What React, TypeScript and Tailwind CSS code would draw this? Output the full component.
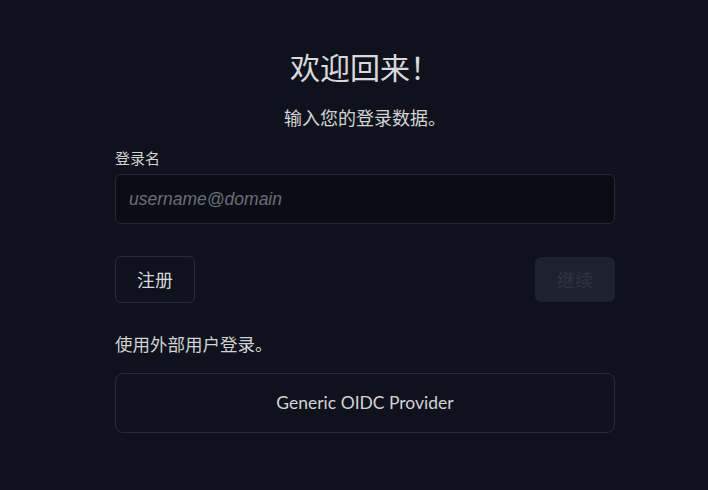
import React, {useState} from "react";

const cjk = {fontFamily: '"Noto Sans CJK SC", "Liberation Sans", sans-serif'}

export default function App() {

    const [login, setLogin] = useState('')

    return (
        <div className="min-h-screen w-full bg-[#0f121c] text-[#d6d7da] pl-[22px]" style={cjk}>
            <div className="w-[500px] mx-auto pt-[48px] flex flex-col">
                <h1 className="text-center text-[30px] leading-[36px] font-normal text-[#d9d9dc]">欢迎回来！</h1>
                <p className="mt-[21px] text-center text-[18px] leading-[24px] text-[#d2d3d6]">输入您的登录数据。</p>

                <label htmlFor="login" className="mt-[19px] text-[15px] leading-[20px] text-[#d2d3d6]">登录名</label>
                <input
                    id="login"
                    value={login}
                    onChange={e => setLogin(e.target.value)}
                    placeholder="username@domain"
                    className="mt-[6px] h-[50px] w-full rounded-md border border-[#262a35] bg-[#0a0d16] px-[13px] text-[17.5px] italic text-[#d2d3d6] placeholder:text-[#6a6d74] outline-none"
                    style={{fontFamily: '"Liberation Sans", Arial, sans-serif'}}
                />

                <div className="mt-[32px] flex items-center justify-between">
                    <button className="h-[47px] w-[80px] rounded-md border border-[#262a35] text-[18px] text-[#d6d7da]">注册</button>
                    <button disabled className="h-[45px] w-[80px] rounded-md bg-[#1e222d] text-[18px] text-[#30343f]">继续</button>
                </div>

                <p className="mt-[29px] text-[17.5px] leading-[24px] text-[#d2d3d6]">使用外部用户登录。</p>

                <button
                    className="mt-[17px] h-[60px] w-full rounded-lg border border-[#262a35] text-[17.5px] leading-[24px] text-[#d2d3d6]"
                    style={{fontFamily: 'Lato, "Liberation Sans", sans-serif'}}
                >
                    Generic OIDC Provider
                </button>
            </div>
        </div>
    )
}
